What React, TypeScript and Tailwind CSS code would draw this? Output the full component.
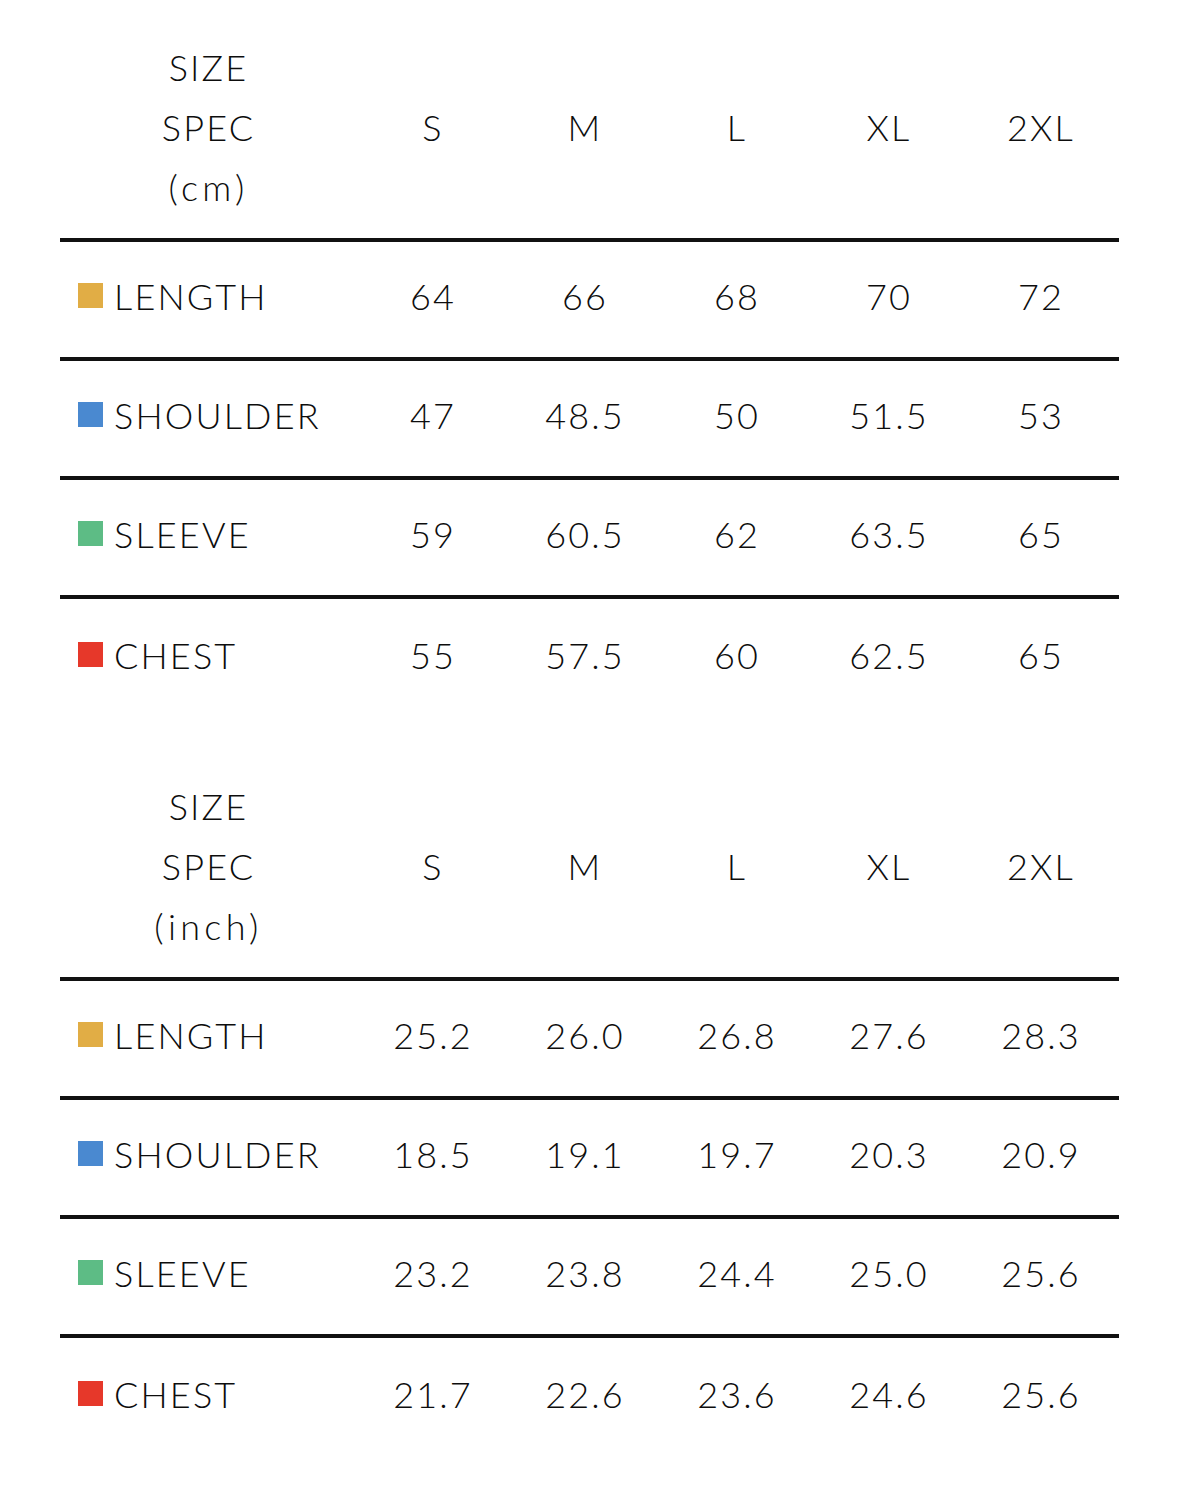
import React from "react";

type Row = { label: string; color: string; values: string[] };

const sizes = ["S", "M", "L", "XL", "2XL"];

const cmRows: Row[] = [
  { label: "LENGTH", color: "bg-[#e1ad45]", values: ["64", "66", "68", "70", "72"] },
  { label: "SHOULDER", color: "bg-[#4a89d0]", values: ["47", "48.5", "50", "51.5", "53"] },
  { label: "SLEEVE", color: "bg-[#5dbc85]", values: ["59", "60.5", "62", "63.5", "65"] },
  { label: "CHEST", color: "bg-[#e6382a]", values: ["55", "57.5", "60", "62.5", "65"] },
];

const inchRows: Row[] = [
  { label: "LENGTH", color: "bg-[#e1ad45]", values: ["25.2", "26.0", "26.8", "27.6", "28.3"] },
  { label: "SHOULDER", color: "bg-[#4a89d0]", values: ["18.5", "19.1", "19.7", "20.3", "20.9"] },
  { label: "SLEEVE", color: "bg-[#5dbc85]", values: ["23.2", "23.8", "24.4", "25.0", "25.6"] },
  { label: "CHEST", color: "bg-[#e6382a]", values: ["21.7", "22.6", "23.6", "24.6", "25.6"] },
];

function Table({ unit, rows }: { unit: string; rows: Row[] }) {
  return (
    <div className="flex flex-col">
      <div className="grid grid-cols-[297px_repeat(5,152px)] items-center pt-[37px] pb-[21px] border-b-4 border-[#111]">
        <div className="flex flex-col items-center leading-[60px]">
          <span>SIZE</span>
          <span>SPEC</span>
          <span className="tracking-[0.12em]">({unit})</span>
        </div>
        {sizes.map((s) => (
          <div key={s} className="text-center leading-[60px]">
            {s}
          </div>
        ))}
      </div>
      {rows.map((r, i) => (
        <div
          key={r.label}
          className={
            "grid grid-cols-[297px_repeat(5,152px)] items-center h-[119px] pb-[8px] " +
            (i < rows.length - 1 ? "border-b-4 border-[#111]" : "")
          }
        >
          <div className="flex items-center pl-[18px] gap-[11px]">
            <span className={"w-[25px] h-[25px] shrink-0 " + r.color}></span>
            <span>{r.label}</span>
          </div>
          {r.values.map((v, j) => (
            <div key={j} className="text-center">
              {v}
            </div>
          ))}
        </div>
      ))}
    </div>
  );
}

export default function App() {
  return (
    <div
      className="w-[1179px] h-[1489px] bg-white text-[#0d0d0d] text-[36px] font-light tracking-[0.06em] px-[60px] flex flex-col"
      style={{ fontFamily: "Lato, 'Noto Sans', sans-serif" }}
    >
      <div className="w-[1059px] flex flex-col gap-[21px]">
        <Table unit="cm" rows={cmRows} />
        <Table unit="inch" rows={inchRows} />
      </div>
    </div>
  );
}
